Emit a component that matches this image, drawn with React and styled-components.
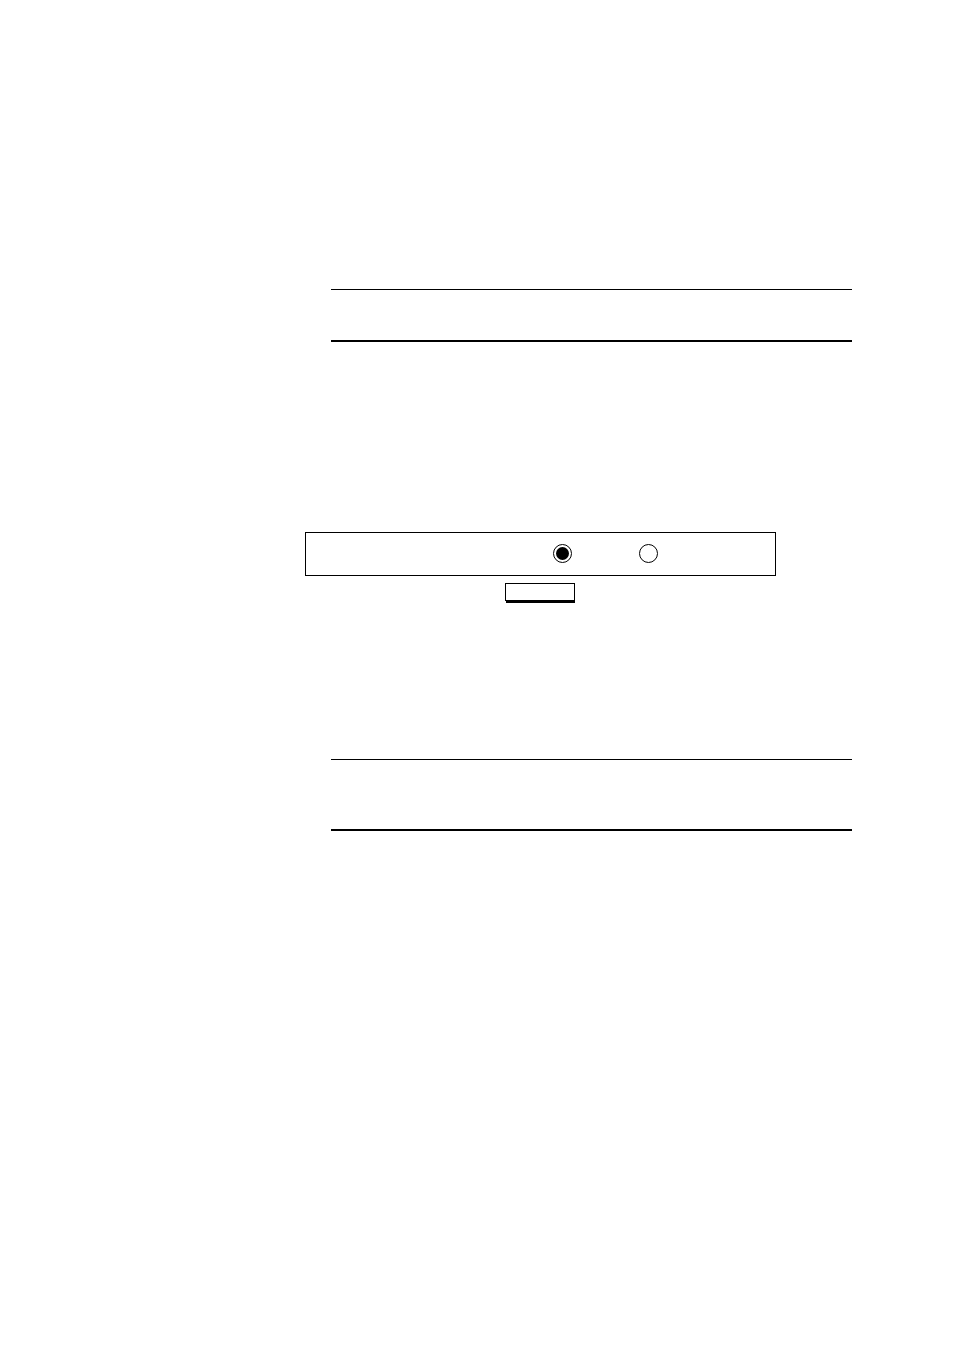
import React, { useState } from 'react'
import styled, { createGlobalStyle } from 'styled-components'

const GlobalStyle = createGlobalStyle`
  * {
    box-sizing: border-box;
  }

  body {
    margin: 0;
    background: #fff;
    color: #000;
    font-family: 'Liberation Sans', Arial, sans-serif;
  }
`

const Page = styled.main`
  display: flex;
  flex-direction: column;
  min-height: 100vh;
  padding: 289px 102px 64px 305px;
`

const Note = styled.section`
  margin-left: 26px;
  min-height: ${({ $tall }) => ($tall ? '72px' : '53px')};
  border-top: 1px solid #000;
  border-bottom: 2px solid #000;
`

const SettingForm = styled.form`
  display: flex;
  flex-direction: column;
  gap: 7px;
  margin: 190px 76px 158px 0;
`

const OptionRow = styled.div`
  display: flex;
  align-items: center;
  gap: 67px;
  padding: 11px 16px 12px 247px;
  border: 1px solid #000;
`

const Radio = styled.input.attrs({ type: 'radio' })`
  appearance: none;
  flex: none;
  width: 19px;
  height: 19px;
  margin: 0;
  border: 1px solid #000;
  border-radius: 50%;
  cursor: pointer;

  &:checked::before {
    content: '';
    display: block;
    width: 13px;
    height: 13px;
    margin: 2px;
    border-radius: 50%;
    background: #000;
  }
`

const SubmitButton = styled.button`
  width: 70px;
  height: 18px;
  margin-left: 200px;
  padding: 0;
  border: 1px solid #000;
  border-radius: 0;
  background: #fff;
  box-shadow: 0 3px 0 -1px #000, 1px 3px 0 -1px #000;
  cursor: pointer;
`

const options = [
  { value: 'on', label: 'On' },
  { value: 'off', label: 'Off' }
]

export default function App() {
  const [selected, setSelected] = useState('on')

  return (
    <>
      <GlobalStyle />
      <Page>
        <Note />
        <SettingForm onSubmit={event => event.preventDefault()}>
          <OptionRow role="radiogroup" aria-label="Setting">
            {options.map(({ value, label }) => (
              <Radio
                key={value}
                name="setting"
                value={value}
                aria-label={label}
                checked={selected === value}
                onChange={() => setSelected(value)}
              />
            ))}
          </OptionRow>
          <SubmitButton type="submit" aria-label="Submit" />
        </SettingForm>
        <Note $tall />
      </Page>
    </>
  )
}
